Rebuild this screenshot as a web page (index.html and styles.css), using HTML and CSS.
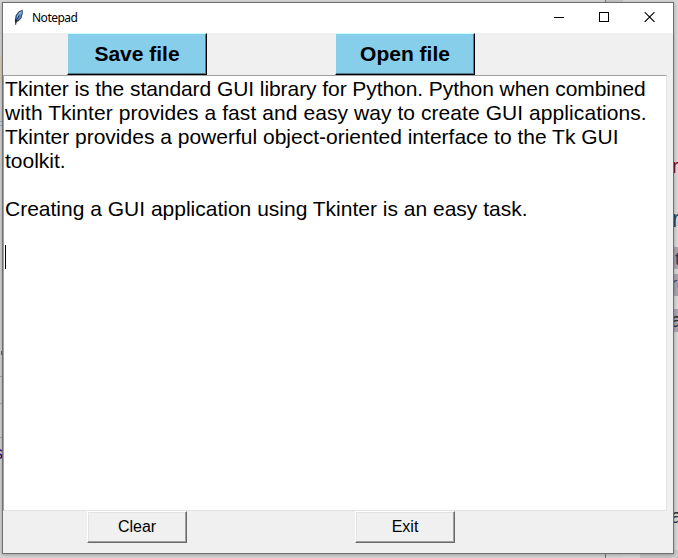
FILE: index.html
```
<!DOCTYPE html>
<html lang="en">
<head>
<meta charset="utf-8">
<title>Notepad</title>
<link rel="stylesheet" href="styles.css">
</head>
<body>
<div class="desktop">
  <div class="strip strip-left"></div>
  <div class="strip top-line"></div>
  <div class="strip top-panel"></div>
  <div class="strip bottom-line"></div>
  <div class="strip bottom-panel"></div>
  <div class="strip bottom-panel-dark"></div>
  <div class="strip tan"></div>
  <div class="strip rule rule-a"></div>
  <div class="strip rule rule-b"></div>
  <div class="strip rule rule-c"></div>
  <div class="strip mark mark-a"></div>
  <div class="strip mark mark-b"></div>
  <div class="strip mark mark-c"></div>
  <span class="peek peek-s">s</span>
  <div class="strip lilac lilac-a"></div>
  <div class="strip lilac lilac-b"></div>
  <div class="strip lilac lilac-c"></div>
  <span class="peek peek-r1">r</span>
  <span class="peek peek-r2">r</span>
  <span class="peek peek-nt">nt</span>
  <span class="peek peek-re">re</span>
  <span class="peek peek-a1">a</span>
  <span class="peek peek-a2">a</span>
</div>
<main class="window">
  <header class="titlebar">
    <svg class="feather" width="12" height="18" viewBox="0 0 12 18">
      <path d="M2.5 15 1.8 11.5 2.8 6 6 2.2 9.5.8 9.8 4 8.5 9 5.5 12.2 3.5 12.8Z" fill="#1c2c44"/>
      <path d="M2.8 11.2 3.6 6.3 6.2 3 9.1 1.6 9 5 7.7 8.8 5 11.6Z" fill="#4f86cc"/>
      <path d="M4 7.6 6.4 4 8.6 2.2 6.8 6.4 4.4 9.4Z" fill="#a4c8f0"/>
      <path d="M6.6 5.6 3.6 10.8 2.6 15.8" stroke="#101722" fill="none" stroke-width=".9"/>
    </svg>
    <span class="title">Notepad</span>
    <div class="controls">
      <svg width="10" height="10" viewBox="0 0 10 10"><path d="M0 5.5H10" stroke="#000"/></svg>
      <svg width="10" height="10" viewBox="0 0 10 10"><rect x=".5" y=".5" width="9" height="9" fill="none" stroke="#000"/></svg>
      <svg width="11" height="10" viewBox="0 0 11 10"><path d="M.7.2 10.5 10M10.5.2.7 10" stroke="#000" stroke-width="1.1"/></svg>
    </div>
  </header>
  <div class="toolbar">
    <button class="blue">Save file</button>
    <button class="blue">Open file</button>
  </div>
  <div class="editor">
    <p class="tight">Tkinter is the standard GUI library for Python. Python when combined</p>
    <p class="loose">with Tkinter provides a fast and easy way to create GUI applications.</p>
    <p>Tkinter provides a powerful object-oriented interface to the Tk GUI</p>
    <p>toolkit.</p>
    <p></p>
    <p>Creating a GUI application using Tkinter is an easy task.</p>
    <p></p>
    <p><span class="caret"></span></p>
  </div>
  <footer class="actions">
    <button class="gray">Clear</button>
    <button class="gray">Exit</button>
  </footer>
</main>
</body>
</html>
```

FILE: styles.css
```
* { box-sizing: border-box; }
body {
  margin: 0;
  width: 678px;
  height: 558px;
  overflow: hidden;
  position: relative;
  background: #d9d9d9;
  font-family: "Liberation Sans", Arial, sans-serif;
  color: #000;
}
.desktop { position: absolute; inset: 0; overflow: hidden; }
.strip, .peek { position: absolute; }
.strip-left { left: 0; top: 0; width: 2px; height: 558px; background: #d6d6d6; }
.top-line { left: 605px; top: 0; width: 1px; height: 2px; background: #777; }
.top-panel { left: 606px; top: 0; width: 17px; height: 2px; background: #c8c8c8; }
.bottom-line { left: 605px; top: 554px; width: 1px; height: 4px; background: #777; }
.bottom-panel { left: 623px; top: 554px; width: 17px; height: 4px; background: #dcdcdc; }
.bottom-panel-dark { left: 640px; top: 550px; width: 38px; height: 8px; background: #ccc; }
.tan { left: 0; top: 57px; width: 2px; height: 26px; background: #d8d0ba; }
.rule { left: 0; width: 2px; height: 1px; background: #aaa; }
.rule-a { top: 376px; }
.rule-b { top: 403px; }
.rule-c { top: 437px; }
.mark { left: 0; width: 2px; height: 1px; background: #8cb4cc; }
.mark-a { top: 121px; }
.mark-b { top: 125px; }
.mark-c { left: 1px; top: 351px; height: 4px; background: #5a6684; }
.lilac { left: 674px; width: 4px; background: #aaa5b0; }
.lilac-a { top: 247px; height: 22px; }
.lilac-b { top: 274px; height: 22px; }
.lilac-c { top: 309px; height: 23px; }
.peek { font-size: 20px; line-height: 22px; color: #333; white-space: nowrap; }
.peek-s { left: -6px; top: 442px; color: #1d0c78; font-size: 18px; }
.peek-r1 { left: 672px; top: 155px; color: #7c1010; }
.peek-r2 { left: 672px; top: 208px; font-size: 23px; color: #1f4965; }
.peek-nt { left: 665px; top: 248px; color: #39335c; font-size: 18px; }
.peek-re { left: 671px; top: 273px; color: #39335c; font-size: 18px; }
.peek-a1 { left: 671px; top: 309px; }
.peek-a2 { left: 671px; top: 505px; }
.window {
  position: relative;
  display: flex;
  flex-direction: column;
  width: 672px;
  height: 552px;
  margin: 2px 0 0 2px;
  border: 1px solid #707070;
  background: #f0f0f0;
  box-shadow: 0 1px 4px rgba(0, 0, 0, .3);
}
.titlebar {
  display: flex;
  align-items: center;
  height: 30px;
  padding: 0 18px 0 10px;
  background: #fff;
}
.title {
  margin: 0 0 0 7px;
  font: 12px/16px "Noto Sans", sans-serif;
  letter-spacing: -.5px;
}
.feather { margin-top: -1px; }
.controls { display: flex; gap: 35px; margin: -2px 0 0 auto; align-items: center; }
button { padding: 0; border-radius: 0; font-family: inherit; color: #000; display: block; }
.toolbar { display: flex; gap: 128px; height: 42px; padding-left: 64px; }
.blue {
  width: 140px;
  height: 42px;
  border: 1px solid #000;
  border-top-color: #c8ffff;
  border-left-color: #c8ffff;
  box-shadow: inset -1px -1px #517c8d;
  background: #87ceeb;
  font-size: 21px;
  font-weight: 700;
}
.editor {
  width: 664px;
  height: 436px;
  padding: 1px 1px 0;
  background: #fff;
  border: 1px solid #a0a0a0;
  border-right-color: #e3e3e3;
  border-bottom-color: #e3e3e3;
  font-size: 21px;
  line-height: 24px;
}
.editor p { margin: 0; height: 24px; white-space: nowrap; }
.editor .tight { letter-spacing: -.07px; }
.editor .loose { letter-spacing: .07px; }
.caret { display: block; width: 1px; height: 24px; background: #000; }
.actions { display: flex; gap: 168px; padding-left: 84px; }
.gray {
  width: 100px;
  height: 32px;
  border: 1px solid #696969;
  border-top-color: #fff;
  border-left-color: #fff;
  box-shadow: inset -1px -1px #a0a0a0, inset 1px 1px #e3e3e3;
  background: #f0f0f0;
  font-size: 16px;
}
```
